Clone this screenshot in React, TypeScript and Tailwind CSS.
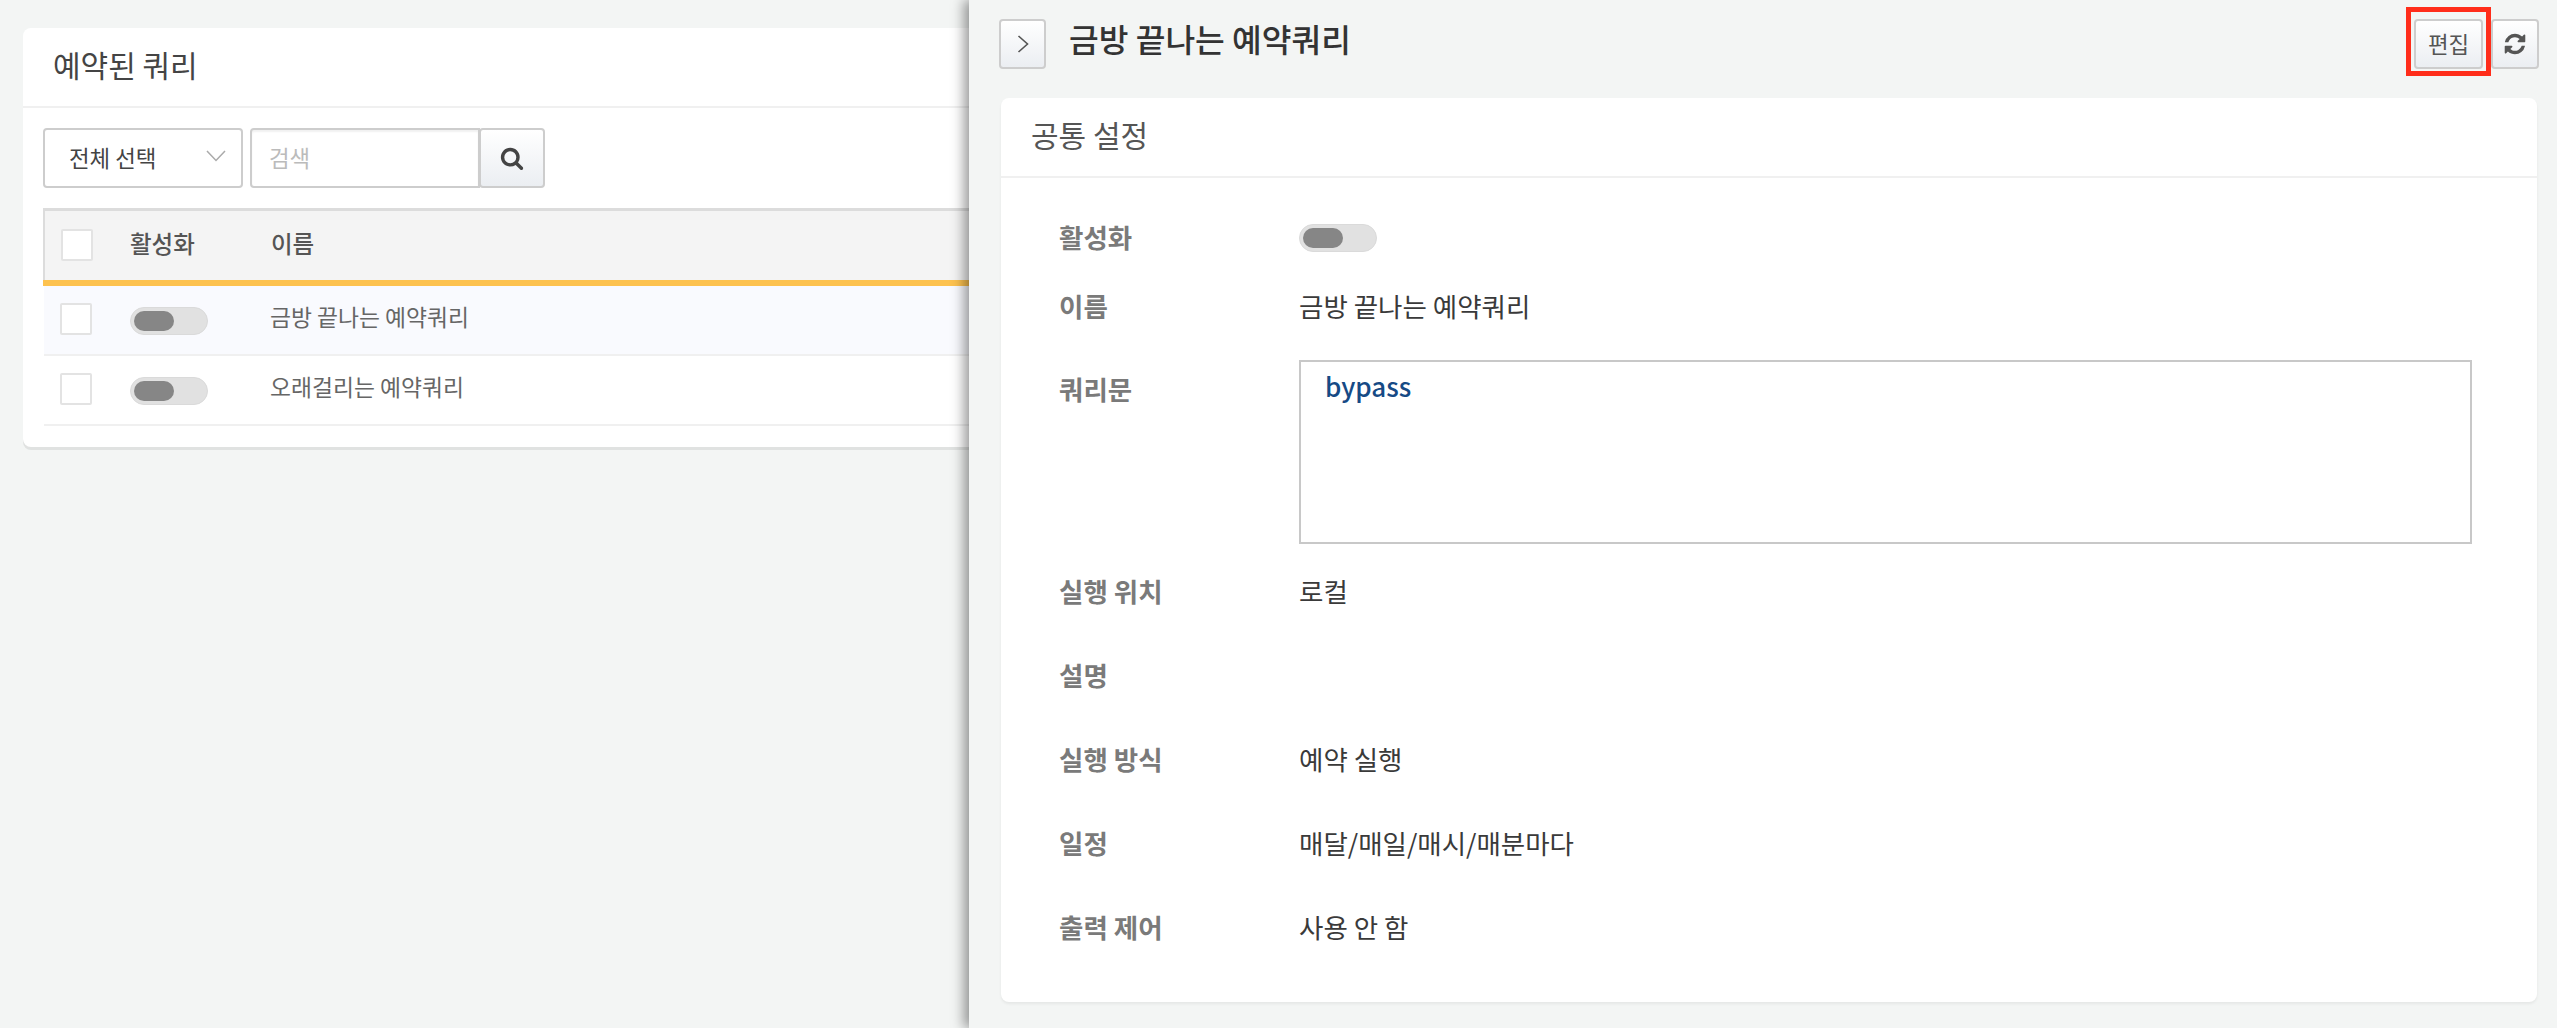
import React from "react";

function SearchIcon() {
  return (
    <svg width="24" height="24" viewBox="0 0 1792 1792" fill="#444">
      <path d="M1216 832q0-185-131.5-316.5t-316.5-131.5-316.5 131.5-131.5 316.5 131.5 316.5 316.5 131.5 316.5-131.5 131.5-316.5zm512 832q0 52-38 90t-90 38q-54 0-90-38l-343-342q-179 124-399 124-143 0-273.5-55.5t-225-150-150-225-55.5-273.5 55.5-273.5 150-225 225-150 273.5-55.5 273.5 55.5 225 150 150 225 55.5 273.5q0 220-124 399l343 343q37 37 37 90z" />
    </svg>
  );
}

function RefreshIcon() {
  return (
    <svg width="24" height="24" viewBox="0 0 1792 1792" fill="#555">
      <path d="M1639 1056q0 5-1 7-64 268-268 434.5t-478 166.5q-146 0-282.5-55t-243.5-157l-129 129q-19 19-45 19t-45-19-19-45v-448q0-26 19-45t45-19h448q26 0 45 19t19 45-19 45l-137 137q71 66 161 102t187 36q134 0 250-65t186-179q11-17 53-117 8-23 30-23h192q13 0 22.5 9.5t9.5 22.5zm25-800v448q0 26-19 45t-45 19h-448q-26 0-45-19t-19-45 19-45l138-138q-148-137-349-137-134 0-250 65t-186 179q-11 17-53 117-8 23-30 23h-199q-13 0-22.5-9.5t-9.5-22.5v-7q65-268 270-434.5t480-166.5q146 0 284 55.5t245 156.5l130-129q19-19 45-19t45 19 19 45z" />
    </svg>
  );
}

function Toggle() {
  return (
    <div className="flex h-[28px] w-[78px] items-center rounded-full border border-[#dadada] bg-[#e1e1e1] pl-[3px]">
      <div className="h-[20px] w-[40px] rounded-[10px] bg-[#868686]" />
    </div>
  );
}

function Check() {
  return <div className="ml-[16px] h-[32px] w-[32px] rounded-[2px] border-2 border-[#e3e3e3] bg-white" />;
}

function Row({ name, selected }: { name: string; selected?: boolean }) {
  return (
    <div className={`flex h-[70px] items-center border-b-2 border-[#f0f0f0] pb-[3px] ${selected ? "bg-[#f9fafe]" : "bg-white"}`}>
      <Check />
      <div className="ml-[38px] w-[140px] pt-[4px]"><Toggle /></div>
      <div className="pb-[3px] text-[22.8px] leading-none text-[#666]">{name}</div>
    </div>
  );
}

const labelCls = "w-[240px] pb-[3px] text-[26.5px] font-bold text-[#7a7a7a]";
const valueCls = "pb-[3px] text-[26.5px] text-[#3a3a3a]";

function Field({ label, value }: { label: string; value?: string }) {
  return (
    <div className="flex h-[84px] items-center">
      <div className={labelCls}>{label}</div>
      <div className={valueCls}>{value}</div>
    </div>
  );
}

const btn = "flex items-center justify-center rounded-[4px] border-2 border-[#cdcdcd] bg-gradient-to-b from-white to-[#ebeef2]";

export default function App() {
  return (
    <div className="relative h-[1028px] w-full overflow-hidden bg-[#f3f5f4] [font-family:'Noto_Sans_CJK_KR','Noto_Sans',sans-serif]">
      <div className="pl-[23px] pr-[23px] pt-[28px]">
        <div className="h-[419px] rounded-[8px] bg-white shadow-[0_3px_0_#e0e2e1]">
          <div className="flex h-[80px] items-center border-b-2 border-[#f0f0f0] pb-[5px] pl-[30px] text-[30px] text-[#444]">예약된 쿼리</div>
          <div className="flex px-[20px] pt-[20px]">
            <div className="flex h-[60px] w-[200px] items-center justify-between rounded-[4px] border-2 border-[#cdcdcd] bg-white pl-[24px] pr-[15px] text-[22.4px] text-[#444]">
              <span>전체 선택</span>
              <svg width="20" height="12" viewBox="0 0 20 12" fill="none" stroke="#aaa" strokeWidth="1.5" className="mb-[4px]"><polyline points="1,1 10,10.5 19,1" /></svg>
            </div>
            <div className="ml-[7px] flex h-[60px] w-[230px] items-center rounded-l-[4px] border-2 border-[#cdcdcd] bg-white pl-[17px] text-[22.4px] text-[#bbb] shadow-[inset_0_2px_2px_rgba(0,0,0,0.06)]">검색</div>
            <div className={`${btn} -ml-[1px] h-[60px] w-[66px]`}><SearchIcon /></div>
          </div>
          <div className="mx-[20px] mt-[20px] flex h-[72px] items-center border-l-2 border-t-[3px] border-[#dcdcdc] bg-[#f4f4f4] pb-[1px]">
            <Check />
            <div className="ml-[37px] w-[141px] pb-[2px] text-[23.5px] font-medium text-[#555]">활성화</div>
            <div className="pb-[2px] text-[23.5px] font-medium text-[#555]">이름</div>
          </div>
          <div className="mx-[20px] h-[6px] bg-[#fdc24f]" />
          <div className="mx-[21px]">
            <Row name="금방 끝나는 예약쿼리" selected />
            <Row name="오래걸리는 예약쿼리" />
          </div>
        </div>
      </div>

      <div className="absolute bottom-0 right-0 top-0 w-[1588px] bg-[#f3f5f4] pl-[30px] pr-[18px] pt-[19px] shadow-[-5px_0_12px_rgba(0,0,0,0.4)]">
        <div className="flex h-[50px] items-center">
          <div className={`${btn} h-[50px] w-[47px]`}>
            <svg width="12" height="18" viewBox="0 0 12 18" fill="none" stroke="#555" strokeWidth="1.6"><polyline points="1.5,1 10.5,9 1.5,17" /></svg>
          </div>
          <div className="ml-[23px] pb-[12px] text-[32.3px] font-medium leading-none text-[#333]">금방 끝나는 예약쿼리</div>
          <div className="relative ml-auto flex gap-[8px]">
            <div className={`${btn} h-[50px] w-[69px] text-[22.4px] text-[#555]`}>편집</div>
            <div className={`${btn} h-[50px] w-[48px]`}><RefreshIcon /></div>
            <div className="absolute left-[-8px] top-[-12px] h-[69px] w-[85px] border-[5px] border-[#ff2d1a]" />
          </div>
        </div>
        <div className="ml-[2px] mt-[29px] h-[904px] w-[1536px] rounded-[8px] bg-white shadow-[0_2px_3px_rgba(0,0,0,0.06)]">
          <div className="flex h-[80px] items-center border-b-2 border-[#f0f0f0] pb-[5px] pl-[30px] text-[30px] text-[#555]">공통 설정</div>
          <div className="pl-[58px] pt-[26px]">
            <div className="flex h-[68px] items-center">
              <div className={labelCls}>활성화</div>
              <Toggle />
            </div>
            <div className="flex h-[70px] items-center">
              <div className={labelCls}>이름</div>
              <div className={valueCls}>금방 끝나는 예약쿼리</div>
            </div>
            <div className="mt-[18px] flex h-[184px]">
              <div className={`${labelCls} pt-[9px]`}>쿼리문</div>
              <div className="w-[1173px] border-2 border-[#c8c8c8] pl-[24px] pt-[4px] text-[26px] font-medium text-[#164a85]">bypass</div>
            </div>
            <div className="mt-[6px]">
              <Field label="실행 위치" value="로컬" />
              <Field label="설명" />
              <Field label="실행 방식" value="예약 실행" />
              <Field label="일정" value="매달/매일/매시/매분마다" />
              <Field label="출력 제어" value="사용 안 함" />
            </div>
          </div>
        </div>
      </div>
    </div>
  );
}
